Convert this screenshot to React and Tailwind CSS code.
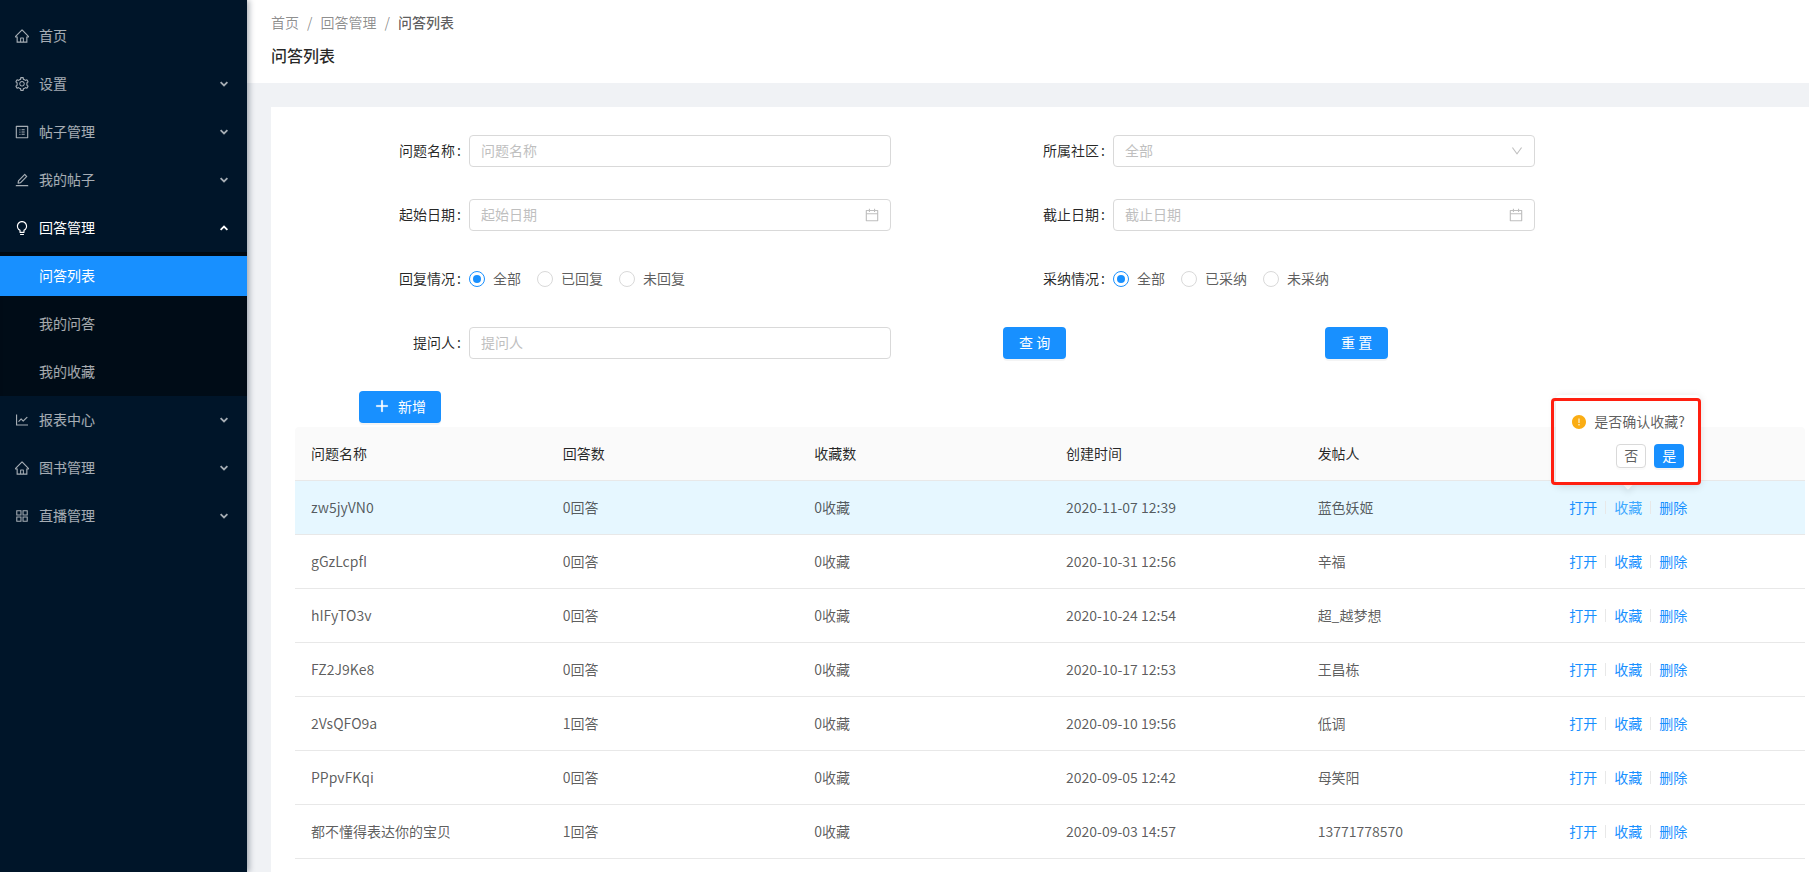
import React, { useState } from "react";
import {
  AiOutlineHome,
  AiOutlineSetting,
  AiOutlineProfile,
  AiOutlineEdit,
  AiOutlineBulb,
  AiOutlineLineChart,
  AiOutlineAppstore,
  AiOutlineCalendar,
  AiOutlineDown,
  AiOutlinePlus,
  AiFillExclamationCircle,
} from "react-icons/ai";

// trims the empty margin that the ant icons carry
const ICON_BOX = "64 64 896 896";

const MENU = [
  { key: "home", label: "首页", icon: AiOutlineHome },
  { key: "settings", label: "设置", icon: AiOutlineSetting, children: [] },
  { key: "posts", label: "帖子管理", icon: AiOutlineProfile, children: [] },
  { key: "my-posts", label: "我的帖子", icon: AiOutlineEdit, children: [] },
  {
    key: "answers",
    label: "回答管理",
    icon: AiOutlineBulb,
    children: ["问答列表", "我的问答", "我的收藏"],
  },
  { key: "reports", label: "报表中心", icon: AiOutlineLineChart, children: [] },
  { key: "books", label: "图书管理", icon: AiOutlineHome, children: [] },
  { key: "live", label: "直播管理", icon: AiOutlineAppstore, children: [] },
];

const COLUMNS = ["问题名称", "回答数", "收藏数", "创建时间", "发帖人", ""];

const ROWS = [
  { name: "zw5jyVN0", answers: 0, favs: 0, time: "2020-11-07 12:39", user: "蓝色妖姬" },
  { name: "gGzLcpfI", answers: 0, favs: 0, time: "2020-10-31 12:56", user: "辛福" },
  { name: "hIFyTO3v", answers: 0, favs: 0, time: "2020-10-24 12:54", user: "超_越梦想" },
  { name: "FZ2J9Ke8", answers: 0, favs: 0, time: "2020-10-17 12:53", user: "王昌栋" },
  { name: "2VsQFO9a", answers: 1, favs: 0, time: "2020-09-10 19:56", user: "低调" },
  { name: "PPpvFKqi", answers: 0, favs: 0, time: "2020-09-05 12:42", user: "母笑阳" },
  { name: "都不懂得表达你的宝贝", answers: 1, favs: 0, time: "2020-09-03 14:57", user: "13771778570" },
];

const inputClass =
  "block w-full h-8 px-[11px] pb-0.5 text-sm bg-white border border-[#d9d9d9] rounded placeholder:text-[#bfbfbf] outline-none focus:border-[#40a9ff]";

const primaryButton =
  "h-8 pb-0.5 rounded bg-[#1890ff] hover:bg-[#40a9ff] text-sm text-white shadow-[0_2px_0_rgba(0,0,0,0.045)]";

function Arrow({ open }) {
  return (
    <svg className={`w-2 h-2 ${open ? "rotate-180" : ""}`} viewBox="0 0 8 8" fill="none" stroke="currentColor" strokeWidth="1.8">
      <path d="M0.6 2.2 L4 5.4 L7.4 2.2" />
    </svg>
  );
}

function Sidebar() {
  const [openKey, setOpenKey] = useState("answers");
  const [selected, setSelected] = useState("问答列表");

  return (
    <aside className="relative z-10 w-[247px] shrink-0 bg-[#001529] pt-3 text-sm text-white/65 shadow-[2px_0_6px_rgba(0,21,41,0.35)]">
      <nav>
        {MENU.map(({ key, label, icon: Icon, children }) => {
          const open = openKey === key;
          if (!children) {
            return (
              <a key={key} href="#" className="flex items-center h-12 pl-[15px] pr-[19px] gap-[10px] hover:text-white">
                <Icon viewBox={ICON_BOX} className="w-[14px] h-[14px]" />
                <span className="pb-0.5">{label}</span>
              </a>
            );
          }
          return (
            <div key={key}>
              <button
                type="button"
                onClick={() => setOpenKey(open ? null : key)}
                className={`flex items-center w-full h-12 pl-[15px] pr-[19px] gap-[10px] text-left hover:text-white ${open ? "text-white" : ""}`}
              >
                <Icon viewBox={ICON_BOX} className="w-[14px] h-[14px]" />
                <span className="flex-1 pb-0.5">{label}</span>
                <Arrow open={open} />
              </button>
              {open && children.length > 0 && (
                <div className="flow-root bg-[#000c17] shadow-[inset_0_6px_6px_-4px_rgba(0,0,0,0.45)]">
                  {children.map((child) => (
                    <div key={child} className="py-1">
                      <a
                        href="#"
                        onClick={() => setSelected(child)}
                        className={`flex items-center h-10 pl-[39px] pb-0.5 hover:text-white ${
                          selected === child ? "bg-[#1890ff] text-white" : ""
                        }`}
                      >
                        {child}
                      </a>
                    </div>
                  ))}
                </div>
              )}
            </div>
          );
        })}
      </nav>
    </aside>
  );
}

function Field({ label, htmlFor, children }) {
  return (
    <div className="flex items-center h-8 pr-28">
      <label htmlFor={htmlFor} className="w-[110px] shrink-0 pr-2 pb-0.5 text-right text-black/85">
        {label}
        <span className="ml-0.5">:</span>
      </label>
      <div className="relative flex-1 min-w-0">{children}</div>
    </div>
  );
}

function RadioField({ label, name, options }) {
  const [value, setValue] = useState(options[0]);
  return (
    <fieldset className="flex items-center h-8 pr-28">
      <legend className="float-left w-[110px] pr-2 pb-0.5 text-right leading-[30px] text-black/85">
        {label}
        <span className="ml-0.5">:</span>
      </legend>
      <div className="flex items-center gap-4">
        {options.map((option) => (
          <label key={option} className="flex items-center gap-2 whitespace-nowrap">
            <input
              type="radio"
              name={name}
              checked={value === option}
              onChange={() => setValue(option)}
              className="grid place-items-center w-4 h-4 appearance-none rounded-full border border-[#d9d9d9] bg-white checked:border-[#1890ff] checked:before:block checked:before:w-2 checked:before:h-2 checked:before:rounded-full checked:before:bg-[#1890ff]"
            />
            <span className="pb-0.5">{option}</span>
          </label>
        ))}
      </div>
    </fieldset>
  );
}

function SearchForm() {
  return (
    <form className="grid grid-cols-2 gap-y-8 pl-16 pr-[158px]" onSubmit={(e) => e.preventDefault()}>
      <Field label="问题名称" htmlFor="title">
        <input id="title" type="text" placeholder="问题名称" className={inputClass} />
      </Field>
      <Field label="所属社区" htmlFor="community">
        <select id="community" className={`${inputClass} appearance-none text-[#bfbfbf]`}>
          <option>全部</option>
        </select>
        <AiOutlineDown viewBox={ICON_BOX} className="absolute right-3 top-[10px] w-3 h-3 text-[#bfbfbf] pointer-events-none" />
      </Field>
      <Field label="起始日期" htmlFor="start">
        <input id="start" type="text" placeholder="起始日期" className={inputClass} />
        <AiOutlineCalendar viewBox={ICON_BOX} className="absolute right-3 top-[9px] w-[14px] h-[14px] text-[#bfbfbf]" />
      </Field>
      <Field label="截止日期" htmlFor="end">
        <input id="end" type="text" placeholder="截止日期" className={inputClass} />
        <AiOutlineCalendar viewBox={ICON_BOX} className="absolute right-3 top-[9px] w-[14px] h-[14px] text-[#bfbfbf]" />
      </Field>
      <RadioField label="回复情况" name="reply" options={["全部", "已回复", "未回复"]} />
      <RadioField label="采纳情况" name="adopt" options={["全部", "已采纳", "未采纳"]} />
      <Field label="提问人" htmlFor="asker">
        <input id="asker" type="text" placeholder="提问人" className={inputClass} />
      </Field>
      <div className="grid grid-cols-2 justify-items-start">
        <button type="submit" className={`${primaryButton} px-4`}>查 询</button>
        <button type="reset" className={`${primaryButton} px-4`}>重 置</button>
      </div>
    </form>
  );
}

function ConfirmPopover() {
  return (
    <div className="absolute left-1/2 bottom-[34px] z-20 w-36 -translate-x-1/2 text-black/65">
      <div className="absolute left-1/2 -bottom-1 w-2 h-2 -translate-x-1/2 rotate-45 bg-white shadow-[3px_3px_7px_rgba(0,0,0,0.07)]" />
      <div className="relative rounded bg-white px-4 py-4 shadow-[0_2px_8px_rgba(0,0,0,0.15)]">
        <div className="flex items-center gap-2 h-[21px] whitespace-nowrap">
          <AiFillExclamationCircle viewBox={ICON_BOX} className="w-[14px] h-[14px] shrink-0 text-[#faad14]" />
          是否确认收藏?
        </div>
        <div className="flex justify-end gap-2 mt-3">
          <button type="button" className="h-6 px-[7px] pb-0.5 rounded border border-[#d9d9d9] bg-white leading-5 shadow-[0_2px_0_rgba(0,0,0,0.015)]">
            否
          </button>
          <button type="button" className="h-6 px-2 pb-0.5 rounded bg-[#1890ff] text-white leading-5 shadow-[0_2px_0_rgba(0,0,0,0.045)]">
            是
          </button>
        </div>
      </div>
      <div className="absolute -left-[5px] -right-px top-[3px] -bottom-px rounded-sm border-3 border-[#ff1f10] pointer-events-none" />
    </div>
  );
}

function QuestionTable() {
  const [confirmRow] = useState("zw5jyVN0");
  return (
    <table className="w-full table-fixed border-separate border-spacing-0 text-left">
      <thead>
        <tr>
          {COLUMNS.map((col, i) => (
            <th
              key={i}
              className="h-[54px] px-4 font-normal text-black/85 bg-[#fafafa] border-b border-[#e8e8e8] first:rounded-tl last:rounded-tr"
            >
              {col}
            </th>
          ))}
        </tr>
      </thead>
      <tbody>
        {ROWS.map((row) => {
          const active = row.name === confirmRow;
          return (
            <tr
              key={row.name}
              className={`hover:bg-[#e6f7ff] [&>td]:h-[54px] [&>td]:px-4 [&>td]:border-b [&>td]:border-[#e8e8e8] ${active ? "bg-[#e6f7ff]" : ""}`}
            >
              <td>{row.name}</td>
              <td>{row.answers}回答</td>
              <td>{row.favs}收藏</td>
              <td>{row.time}</td>
              <td>{row.user}</td>
              <td>
                <div className="flex items-center gap-2 h-[21px] text-[#1890ff] whitespace-nowrap">
                  <a href="#">打开</a>
                  <span className="w-px h-[13px] bg-[#e8e8e8]" />
                  <div className="relative h-[21px]">
                    <a href="#" className={active ? "text-[#40a9ff]" : ""}>收藏</a>
                    {active && <ConfirmPopover />}
                  </div>
                  <span className="w-px h-[13px] bg-[#e8e8e8]" />
                  <a href="#">删除</a>
                </div>
              </td>
            </tr>
          );
        })}
      </tbody>
    </table>
  );
}

export default function App() {
  return (
    <div className="flex min-h-screen bg-[#f0f2f5] font-['Noto_Sans_CJK_SC',sans-serif] text-sm leading-[21px] text-black/65">
      <Sidebar />
      <div className="flex flex-col flex-1 min-w-0">
        <header className="h-[83px] pl-6 pt-3 bg-white">
          <nav className="flex gap-2 text-black/45">
            <a href="#">首页</a>
            <span>/</span>
            <a href="#">回答管理</a>
            <span>/</span>
            <span className="font-medium text-black/65">问答列表</span>
          </nav>
          <h1 className="mt-2.5 text-base leading-6 font-medium text-black/85">问答列表</h1>
        </header>
        <main className="flex-1 mt-6 ml-6 pt-7 pl-6 pr-1 bg-white">
          <SearchForm />
          <div className="mt-8 mb-1 pl-16">
            <button type="button" className={`${primaryButton} flex items-center gap-2 px-[15px]`}>
              <AiOutlinePlus className="w-4 h-4" strokeWidth="40" />
              新增
            </button>
          </div>
          <QuestionTable />
        </main>
      </div>
    </div>
  );
}
